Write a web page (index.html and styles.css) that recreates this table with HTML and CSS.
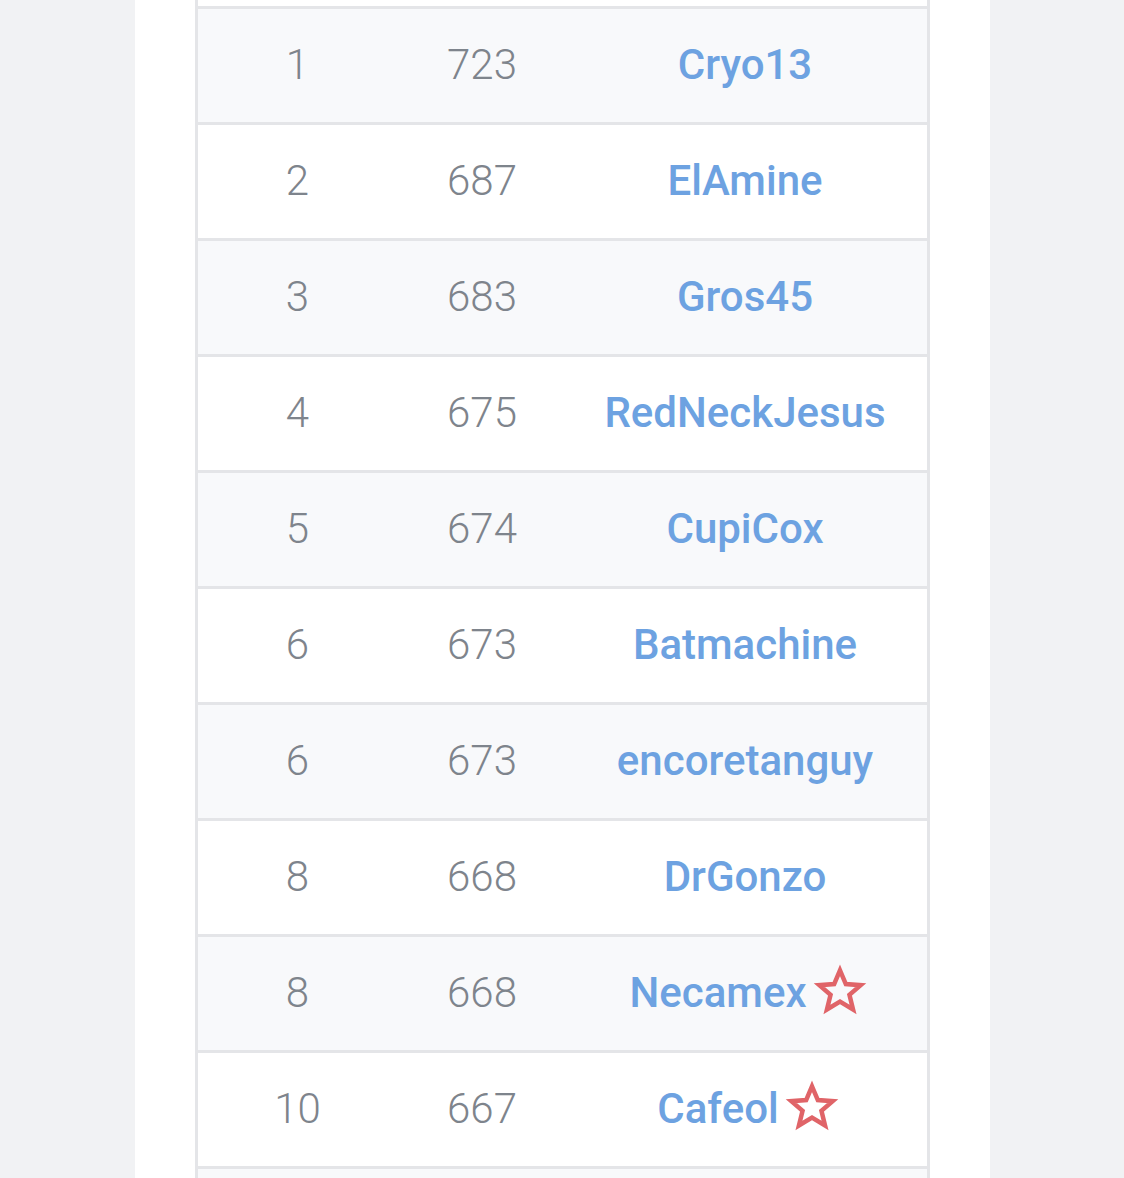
FILE: index.html
```html
<!DOCTYPE html>
<html lang="en">
<head>
    <meta charset="UTF-8">
    <meta name="viewport" content="width=device-width, initial-scale=1.0">
    <title>Classement</title>
    <link rel="stylesheet" href="styles.css">
</head>
<body>
    <div class="panel">
        <div class="ranking">
            <div class="row row-cut"></div>
            <div class="row odd"><span class="rank">1</span><span class="score">723</span><a class="name" href="#">Cryo13</a></div>
            <div class="row"><span class="rank">2</span><span class="score">687</span><a class="name" href="#">ElAmine</a></div>
            <div class="row odd"><span class="rank">3</span><span class="score">683</span><a class="name" href="#">Gros45</a></div>
            <div class="row"><span class="rank">4</span><span class="score">675</span><a class="name" href="#">RedNeckJesus</a></div>
            <div class="row odd"><span class="rank">5</span><span class="score">674</span><a class="name" href="#">CupiCox</a></div>
            <div class="row"><span class="rank">6</span><span class="score">673</span><a class="name" href="#">Batmachine</a></div>
            <div class="row odd"><span class="rank">6</span><span class="score">673</span><a class="name" href="#">encoretanguy</a></div>
            <div class="row"><span class="rank">8</span><span class="score">668</span><a class="name" href="#">DrGonzo</a></div>
            <div class="row odd"><span class="rank">8</span><span class="score">668</span><a class="name" href="#">Necamex<svg class="star" viewBox="0 0 24 24"><path d="M12 2.8l2.6 6.1 6.6.5-5 4.3 1.6 6.5L12 16.7l-5.8 3.5 1.6-6.5-5-4.3 6.6-.5z"/></svg></a></div>
            <div class="row"><span class="rank">10</span><span class="score">667</span><a class="name" href="#">Cafeol<svg class="star" viewBox="0 0 24 24"><path d="M12 2.8l2.6 6.1 6.6.5-5 4.3 1.6 6.5L12 16.7l-5.8 3.5 1.6-6.5-5-4.3 6.6-.5z"/></svg></a></div>
            <div class="row odd"></div>
        </div>
    </div>
</body>
</html>
```

FILE: styles.css
```css
html, body {
    margin: 0;
    padding: 0;
    height: 100%;
    overflow: hidden;
}
body {
    background-color: #f1f2f4;
    font-family: Roboto, "Liberation Sans", sans-serif;
}
.panel {
    width: 855px;
    min-height: 100%;
    margin-left: 135px;
    background-color: #fff;
    padding-left: 60px;
    box-sizing: border-box;
}
.ranking {
    width: 735px;
    border-left: 3px solid #e4e5e8;
    border-right: 3px solid #e4e5e8;
    box-sizing: border-box;
}
.row {
    display: grid;
    grid-template-columns: 199px 170px 1fr;
    align-items: center;
    text-align: center;
    height: 113px;
    border-bottom: 3px solid #e4e5e8;
    background-color: #fff;
}
.row.odd {
    background-color: #f8f9fb;
}
.row-cut {
    height: 6px;
}
.rank, .score {
    font-size: 42px;
    font-weight: 300;
    color: #7e848c;
    padding-bottom: 2px;
}
.name {
    font-size: 42px;
    font-weight: 500;
    color: #6da2e1;
    text-decoration: none;
    display: flex;
    align-items: center;
    justify-content: center;
    padding-right: 4px;
    padding-bottom: 2px;
}
.star {
    width: 54px;
    height: 54px;
    margin-left: 6px;
    margin-right: -6px;
    margin-bottom: 4px;
    fill: none;
    stroke: #e06468;
    stroke-width: 2;
}
```
